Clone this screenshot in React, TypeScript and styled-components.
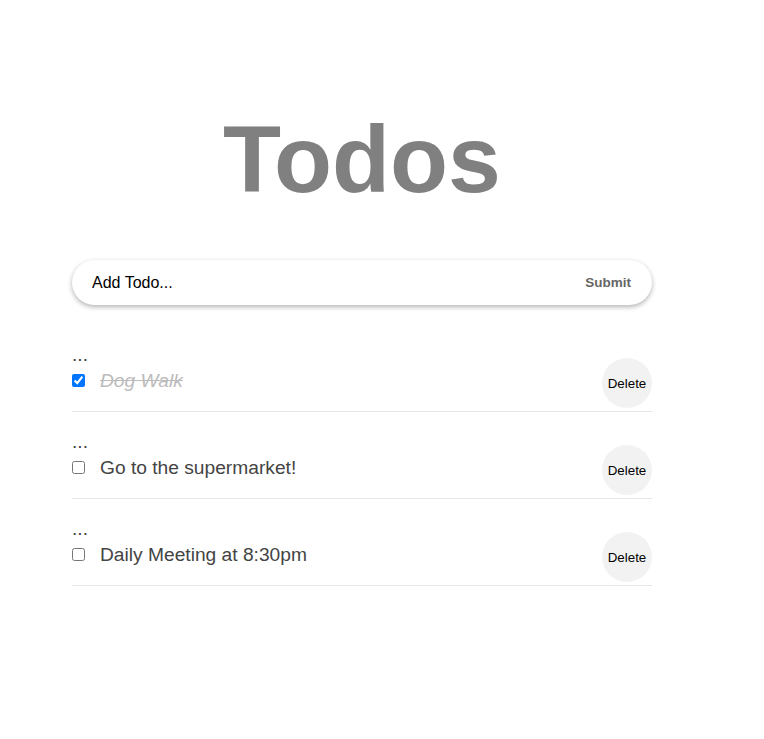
import React, { useState } from "react";
import styled, { createGlobalStyle } from "styled-components";

const GlobalStyle = createGlobalStyle`
  html, body {
    margin: 0;
    padding: 0;
    background: #ffffff;
    font-family: "Liberation Sans", Arial, sans-serif;
  }
`;

const Page = styled.main`
  width: 580px;
  margin-left: 72px;
  padding-top: 104px;
`;

const Title = styled.h1`
  margin: 0;
  font-size: 95px;
  line-height: 110px;
  font-weight: 700;
  color: #808080;
  text-align: center;
`;

const Form = styled.form`
  margin-top: 46px;
  height: 45px;
  display: flex;
  align-items: center;
  border-radius: 23px;
  background: #fff;
  box-shadow: 0 2px 5px rgba(0, 0, 0, 0.3);
  padding: 0 21px 0 20px;
  box-sizing: border-box;
`;

const Input = styled.input`
  flex: 1;
  border: none;
  outline: none;
  background: transparent;
  font-family: "Liberation Sans", Arial, sans-serif;
  font-size: 16px;
  color: #000;
  padding: 0;
  &::placeholder {
    color: #000;
  }
`;

const SubmitButton = styled.button`
  border: none;
  background: transparent;
  font-family: "Liberation Sans", Arial, sans-serif;
  font-size: 13.5px;
  font-weight: 700;
  color: #666;
  padding: 0;
  cursor: pointer;
`;

const List = styled.ul`
  list-style: none;
  margin: 20px 0 0;
  padding: 0;
`;

const Item = styled.li`
  display: flex;
  align-items: flex-end;
  justify-content: space-between;
  padding: 19px 0 3px;
  border-bottom: 1px solid #e6e6e6;
`;

const Left = styled.div`
  display: flex;
  flex-direction: column;
  padding-bottom: 16px;
`;

const Handle = styled.div`
  font-size: 19.2px;
  line-height: 22px;
  color: #444;
  margin-bottom: 4px;
`;

const Row = styled.label`
  display: flex;
  align-items: center;
  height: 22px;
`;

const Check = styled.input`
  margin: 0 15px 1px 0;
  width: 13px;
  height: 13px;
`;

const Text = styled.span<{ $done: boolean }>`
  font-size: 19.2px;
  line-height: 22px;
  color: ${(p) => (p.$done ? "#bbbbbb" : "#444444")};
  font-style: ${(p) => (p.$done ? "italic" : "normal")};
  text-decoration: ${(p) => (p.$done ? "line-through" : "none")};
`;

const DeleteButton = styled.button`
  width: 50px;
  height: 50px;
  border-radius: 50%;
  border: none;
  background: #f2f2f3;
  font-family: "Liberation Sans", Arial, sans-serif;
  font-size: 13.333px;
  color: #000;
  padding: 0;
  cursor: pointer;
`;

type Todo = { id: number; text: string; done: boolean };

export default function App() {
  const [todos, setTodos] = useState<Todo[]>([
    { id: 1, text: "Dog Walk", done: true },
    { id: 2, text: "Go to the supermarket!", done: false },
    { id: 3, text: "Daily Meeting at 8:30pm", done: false },
  ]);

  const toggle = (id: number) =>
    setTodos((t) => t.map((x) => (x.id === id ? { ...x, done: !x.done } : x)));
  const remove = (id: number) => setTodos((t) => t.filter((x) => x.id !== id));

  return (
    <>
      <GlobalStyle />
      <Page>
        <Title>Todos</Title>
        <Form onSubmit={(e) => e.preventDefault()}>
          <Input placeholder="Add Todo..." />
          <SubmitButton type="submit">Submit</SubmitButton>
        </Form>
        <List>
          {todos.map((t) => (
            <Item key={t.id}>
              <Left>
                <Handle>...</Handle>
                <Row>
                  <Check type="checkbox" checked={t.done} onChange={() => toggle(t.id)} />
                  <Text $done={t.done}>{t.text}</Text>
                </Row>
              </Left>
              <DeleteButton onClick={() => remove(t.id)}>Delete</DeleteButton>
            </Item>
          ))}
        </List>
      </Page>
    </>
  );
}
